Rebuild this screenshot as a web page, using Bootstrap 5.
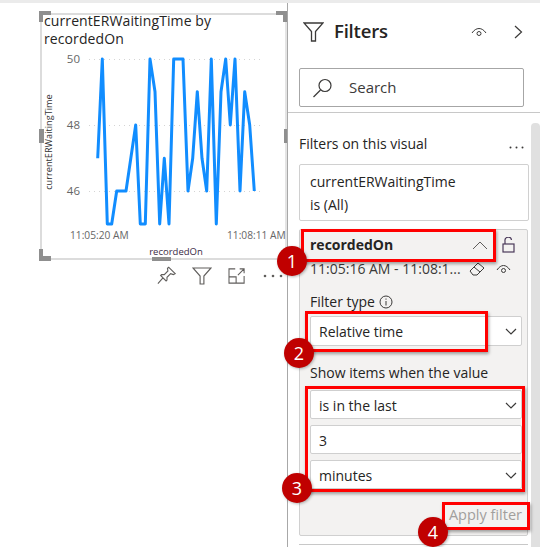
<!DOCTYPE html>
<html lang="en">
<head>
<meta charset="UTF-8">
<title>Filters</title>
<link href="https://cdn.jsdelivr.net/npm/bootstrap@5.3.2/dist/css/bootstrap.min.css" rel="stylesheet">
<style>
html, body { height: 547px; overflow: hidden; }
body { background: #fff; font-family: "Open Sans", "Noto Sans", sans-serif; color: #252423; position: relative; }
.top-strip { height: 3px; background: #ebebeb; }
.page-wrap { height: 544px; }
.canvas-pane { width: 288px; border-right: 1px solid #a8a8a8; flex: none; padding: 10px 0 0 40px; }
.visual { width: 247px; height: 247px; position: relative; border: 2px solid #dcdcdc; border-right-color: #e4e4e4; }
.visual svg { position: absolute; left: -2px; top: -2px; overflow: visible; }
.visual-title { font-size: 14px; line-height: 18px; margin: -3px 0 0 2px; position: relative; letter-spacing: .1px; white-space: nowrap; }
.visual-actions { padding: 6px 0 0 117px; }
.filter-pane { width: 252px; flex: none; position: relative; }
.pane-head { height: 57px; padding: 0 17px 0 15px; }
.pane-title { font-size: 18.5px; font-weight: 600; margin-left: 10px; line-height: 1; letter-spacing: -.2px; }
.search-box { margin: 8px 16px 0 11px; height: 39px; border: 1px solid #a6a6a6; border-radius: 2px; padding-left: 12px; font-size: 15px; color: #3b3a39; gap: 16px; }
.pane-rule { border-top: 1px solid #c8c8c8; margin-top: 5px; height: 1px; }
.scroll-track { position: absolute; right: 0; top: 120px; width: 9px; bottom: 0; background: #e0e0e0; border-radius: 4px 4px 0 0; }
.pane-sub { font-size: 14px; padding: 21px 16px 0 11px; height: 51px; line-height: 20px; }
.f-card { margin-left: 11px; width: 230px; border: 1px solid #d0d0d0; border-radius: 2px; padding: 5px 10px; font-size: 14px; line-height: 23px; height: 57px; }
.f-open { margin: 8px 0 0 11px; width: 229px; height: 307px; background: #f3f2f1; border: 1px solid #d0d0d0; border-radius: 2px; padding: 3px 0 0 10px; font-size: 14px; }
.f-name { font-weight: 700; font-size: 14px; height: 24px; line-height: 24px; }
.f-range { height: 24px; white-space: nowrap; line-height: 24px; color: #3b3a39; }
.f-label { line-height: 20px; margin-top: 11px; }
.f-input { width: 212px; height: 30px; background: #fff; border: 1px solid #cfcfcf; border-radius: 2px; padding: 1px 4px 0 8px; margin-top: 4px; font-size: 14px; }
.f-gap { margin-top: 17px; }
.f-stack { margin-top: 7px; }
.f-stack .f-input { margin-top: 6px; height: 29px; padding-top: 2px; }
.f-stack .f-input:first-child { margin-top: 0; }
.f-apply { color: #a19f9d; font-size: 14.5px; line-height: 20px; text-align: right; width: 212px; margin-top: 16px; }
.f-next { margin: 8px 0 0 11px; width: 229px; border-top: 1px solid #c8c8c8; }
.callout { position: absolute; border: 3px solid #f00; box-shadow: 1px 2px 3px rgba(0,0,0,.35); }
.num-dot { position: absolute; width: 30px; height: 30px; border-radius: 50%; background: #c00000; color: #fff; font-size: 18px; line-height: 30px; text-align: center; box-shadow: 1px 1px 3px rgba(0,0,0,.3); }
</style>
</head>
<body>
<div class="top-strip"></div>
<div class="page-wrap d-flex">
  <div class="canvas-pane">
    <div class="visual">
      <div class="visual-title">currentERWaitingTime by<br>recordedOn</div>
      <svg width="247" height="247" viewBox="40 13 247 247" font-family="Open Sans, sans-serif">
        <g stroke="#d4d4d4" stroke-dasharray="1 4">
          <line x1="89" y1="59.5" x2="262" y2="59.5"/>
          <line x1="89" y1="125.5" x2="262" y2="125.5"/>
          <line x1="89" y1="191.5" x2="262" y2="191.5"/>
        </g>
        <g fill="#666" font-size="11.500" text-anchor="end">
          <text x="80" y="63">50</text>
          <text x="80" y="129">48</text>
          <text x="80" y="195">46</text>
        </g>
        <text x="70" y="239" font-size="10.200" fill="#666">11:05:20 AM</text>
        <text x="227" y="239" font-size="10.200" fill="#666">11:08:11 AM</text>
        <text transform="translate(52 142) rotate(-90)" text-anchor="middle" font-size="9.200" fill="#333">currentERWaitingTime</text>
        <text x="176" y="255" text-anchor="middle" font-size="9.500" fill="#3a2a45">recordedOn</text>
        <polyline fill="none" stroke="#118dff" stroke-width="3" stroke-linejoin="round" points="97.7,158.3 102.3,59 107.3,224 111.7,224 116.7,191 126,191 135.7,125 140.3,224 145.3,224 150,59 155,91.7 159.7,224 164.3,158.3 169,224 173.7,59 183,59 188,191 192.7,158.3 197.3,91.7 202,158.3 206.7,191 211.3,59 216.3,224 221,91.7 225.7,59 230.3,125 235,59 240,191 244.7,91.7 249.7,125 254.3,191"/>
        <g fill="#8f8f8f">
          <path d="M39 11h12v4h-8v7h-4zM276 11h11v11h-4v-7h-7zM39 249h4v7h8v5h-12zM152 257h19v4h-19zM39 129h5v14h-5zM284 129h3v14h-3z"/>
        </g>
      </svg>
    </div>
    <div class="visual-actions d-flex align-items-center">
      <svg width="20" height="19" viewBox="0 0 22 20" fill="none" stroke="#605e5c" stroke-width="1.200"><path d="M13 1l7 7-2 1-3-1-4 4 0 3-1 1-6-6 1-1 3 0 4-4-.5-3zM7 12l-6 7"/></svg>
      <svg style="margin-left:15px" width="20" height="18" viewBox="0 0 21 19" fill="none" stroke="#605e5c" stroke-width="1.200"><path d="M1 1h19l-7.500 8.500v8.500h-4v-8.500z"/></svg>
      <svg style="margin-left:16px" width="18" height="16" viewBox="0 0 20 18" fill="none" stroke="#605e5c" stroke-width="1.200"><path d="M8 1h-7v16h17v-8M1 10h8v7M11 8l7-7M13 1h5v5"/></svg>
      <svg style="margin-left:17px" width="20" height="4" viewBox="0 0 20 4" fill="#605e5c"><circle cx="2" cy="2" r="1.300"/><circle cx="10" cy="2" r="1.300"/><circle cx="18" cy="2" r="1.300"/></svg>
    </div>
  </div>
  <div class="filter-pane">
    <div class="pane-head d-flex align-items-center">
      <svg width="21" height="20" viewBox="0 0 21 20" fill="none" stroke="#3b3a39" stroke-width="1.300"><path d="M1 1h19l-7.500 8.500v9.500h-4v-9.500z"/></svg>
      <span class="pane-title">Filters</span>
      <svg class="ms-auto" width="16" height="10" viewBox="0 0 16 10" fill="none" stroke="#3b3a39"><path d="M1 6c4-6 10-6 14 0"/><circle cx="8" cy="6.500" r="2"/></svg>
      <svg style="margin-left:27px" width="9" height="14" viewBox="0 0 9 14" fill="none" stroke="#3b3a39" stroke-width="1.200"><path d="M1 1l6.500 6-6.500 6"/></svg>
    </div>
    <div class="search-box d-flex align-items-center">
      <svg width="21" height="20" viewBox="0 0 21 20" fill="none" stroke="#3b3a39" stroke-width="1.200"><circle cx="13" cy="7.500" r="6"/><path d="M8.500 12l-7 7"/></svg>
      <span>Search</span>
    </div>
    <div class="pane-rule"></div>
    <div class="scroll-track"></div>
    <div class="pane-sub d-flex justify-content-between">
      <span>Filters on this visual</span>
      <svg style="margin-top:12px" width="15" height="3" viewBox="0 0 15 3" fill="#3b3a39"><circle cx="1.500" cy="1.500" r="1"/><circle cx="7.500" cy="1.500" r="1"/><circle cx="13.500" cy="1.500" r="1"/></svg>
    </div>
    <div class="f-card">currentERWaitingTime<br>is (All)</div>
    <div class="f-open">
      <div class="f-name d-flex align-items-center">
        <span>recordedOn</span>
        <svg style="margin-left:79px" width="16" height="9" viewBox="0 0 16 9" fill="none" stroke="#605e5c"><path d="M1 8l7-7 7 7"/></svg>
        <svg style="margin-left:14px" width="13" height="16" viewBox="0 0 13 16" fill="none" stroke="#4b3a5a" stroke-width="1.200"><rect x="1" y="7" width="11" height="8"/><path d="M3 7V4a3.200 3.200 0 0 1 6.500-1"/></svg>
      </div>
      <div class="f-range d-flex">
        <span>11:05:16 AM - 11:08:1...</span>
        <svg style="margin:5px 0 0 8px" width="16" height="14" viewBox="0 0 16 14" fill="none" stroke="#3b3a39"><path d="M1 9l8-8 6 5-7 7H4zM5 5l6 5"/></svg>
        <svg style="margin:7px 0 0 11px" width="15" height="10" viewBox="0 0 15 10" fill="none" stroke="#3b3a39"><path d="M1 6c4-6 9-6 13 0"/><circle cx="7.500" cy="6.500" r="2"/></svg>
      </div>
      <div class="f-label d-flex align-items-center gap-1">Filter type
        <svg width="14" height="14" viewBox="0 0 14 14" fill="none" stroke="#3b3a39"><circle cx="7" cy="7" r="6"/><path d="M7 6v4.500M7 3.500v1.200"/></svg>
      </div>
      <div class="f-input d-flex align-items-center justify-content-between">Relative time
        <svg width="12" height="7" viewBox="0 0 12 7" fill="none" stroke="#3b3a39" stroke-width="1.200"><path d="M1 1l5 5 5-5"/></svg>
      </div>
      <div class="f-label f-gap">Show items when the value</div>
      <div class="f-stack">
        <div class="f-input d-flex align-items-center justify-content-between">is in the last
          <svg width="12" height="7" viewBox="0 0 12 7" fill="none" stroke="#3b3a39" stroke-width="1.200"><path d="M1 1l5 5 5-5"/></svg>
        </div>
        <div class="f-input d-flex align-items-center">3</div>
        <div class="f-input d-flex align-items-center justify-content-between">minutes
          <svg width="12" height="7" viewBox="0 0 12 7" fill="none" stroke="#3b3a39" stroke-width="1.200"><path d="M1 1l5 5 5-5"/></svg>
        </div>
      </div>
      <div class="f-apply">Apply filter</div>
    </div>
    <div class="f-next"></div>
  </div>
</div>
<div class="callout" style="left:301px;top:229px;width:195px;height:33px"></div>
<div class="callout" style="left:305px;top:311px;width:183px;height:41px"></div>
<div class="callout" style="left:305px;top:386px;width:220px;height:106px"></div>
<div class="callout" style="left:442px;top:502px;width:88px;height:28px"></div>
<div class="num-dot" style="left:277px;top:246px">1</div>
<div class="num-dot" style="left:284px;top:338px">2</div>
<div class="num-dot" style="left:282px;top:473px">3</div>
<div class="num-dot" style="left:418px;top:517px">4</div>
<script src="https://cdn.jsdelivr.net/npm/bootstrap@5.3.2/dist/js/bootstrap.bundle.min.js"></script>
</body>
</html>
